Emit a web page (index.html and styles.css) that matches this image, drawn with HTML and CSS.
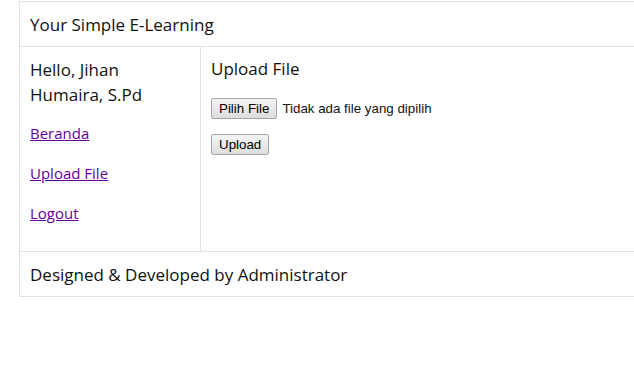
FILE: index.html
```html
<!DOCTYPE html>
<html lang="id">
<head>
    <meta charset="UTF-8">
    <title>Your Simple E-Learning</title>
    <link rel="stylesheet" href="styles.css">
</head>
<body>
    <div class="page">
        <div class="header">Your Simple E-Learning</div>
        <div class="row">
            <div class="sidebar">
                <p class="hello">Hello, Jihan Humaira, S.Pd</p>
                <p><a href="#">Beranda</a></p>
                <p><a href="#">Upload File</a></p>
                <p><a href="#">Logout</a></p>
            </div>
            <div class="main">
                <h3>Upload File</h3>
                <form class="upload-form">
                    <div class="file-row">
                        <button type="button" class="btn">Pilih File</button>
                        <span class="file-name">Tidak ada file yang dipilih</span>
                    </div>
                    <div class="submit-row">
                        <button type="button" class="btn">Upload</button>
                    </div>
                </form>
            </div>
        </div>
        <div class="footer">Designed &amp; Developed by Administrator</div>
    </div>
</body>
</html>
```

FILE: styles.css
```css
body {
    margin: 0;
    font-family: "Open Sans", "Noto Sans", sans-serif;
    color: #111;
    background: #fff;
}
.page {
    margin: 1px 0 0 19px;
    width: 760px;
    border: 1px solid #e1e1e1;
}
.header,
.footer {
    height: 44px;
    padding: 0 10px;
    display: flex;
    align-items: center;
    font-size: 17px;
}
.header {
    border-bottom: 1px solid #e1e1e1;
}
.footer {
    border-top: 1px solid #e1e1e1;
}
.row {
    display: flex;
}
.sidebar {
    width: 160px;
    padding: 10px;
    border-right: 1px solid #e1e1e1;
    font-size: 15px;
}
.sidebar p {
    margin: 0 0 16px;
    line-height: 24px;
}
.sidebar p.hello {
    margin-bottom: 14px;
    max-width: 140px;
    font-size: 17px;
    line-height: 25px;
}
.sidebar a {
    color: #660099;
}
.main {
    flex: 1;
    padding: 10px;
}
.main h3 {
    margin: 0;
    font-weight: normal;
    font-size: 17px;
    line-height: 24px;
}
.upload-form {
    font-family: Arial, "Liberation Sans", sans-serif;
    font-size: 13.33px;
}
.file-row {
    margin-top: 17px;
    display: flex;
    align-items: center;
    gap: 5px;
}
.submit-row {
    margin-top: 15px;
}
.btn {
    font-family: Arial, "Liberation Sans", sans-serif;
    font-size: 13.33px;
    color: #000;
    height: 21px;
    padding: 0 7px;
    border: 1px solid #a6a6a6;
    border-radius: 2px;
    background: linear-gradient(#f4f4f4, #dddddd);
}
```
